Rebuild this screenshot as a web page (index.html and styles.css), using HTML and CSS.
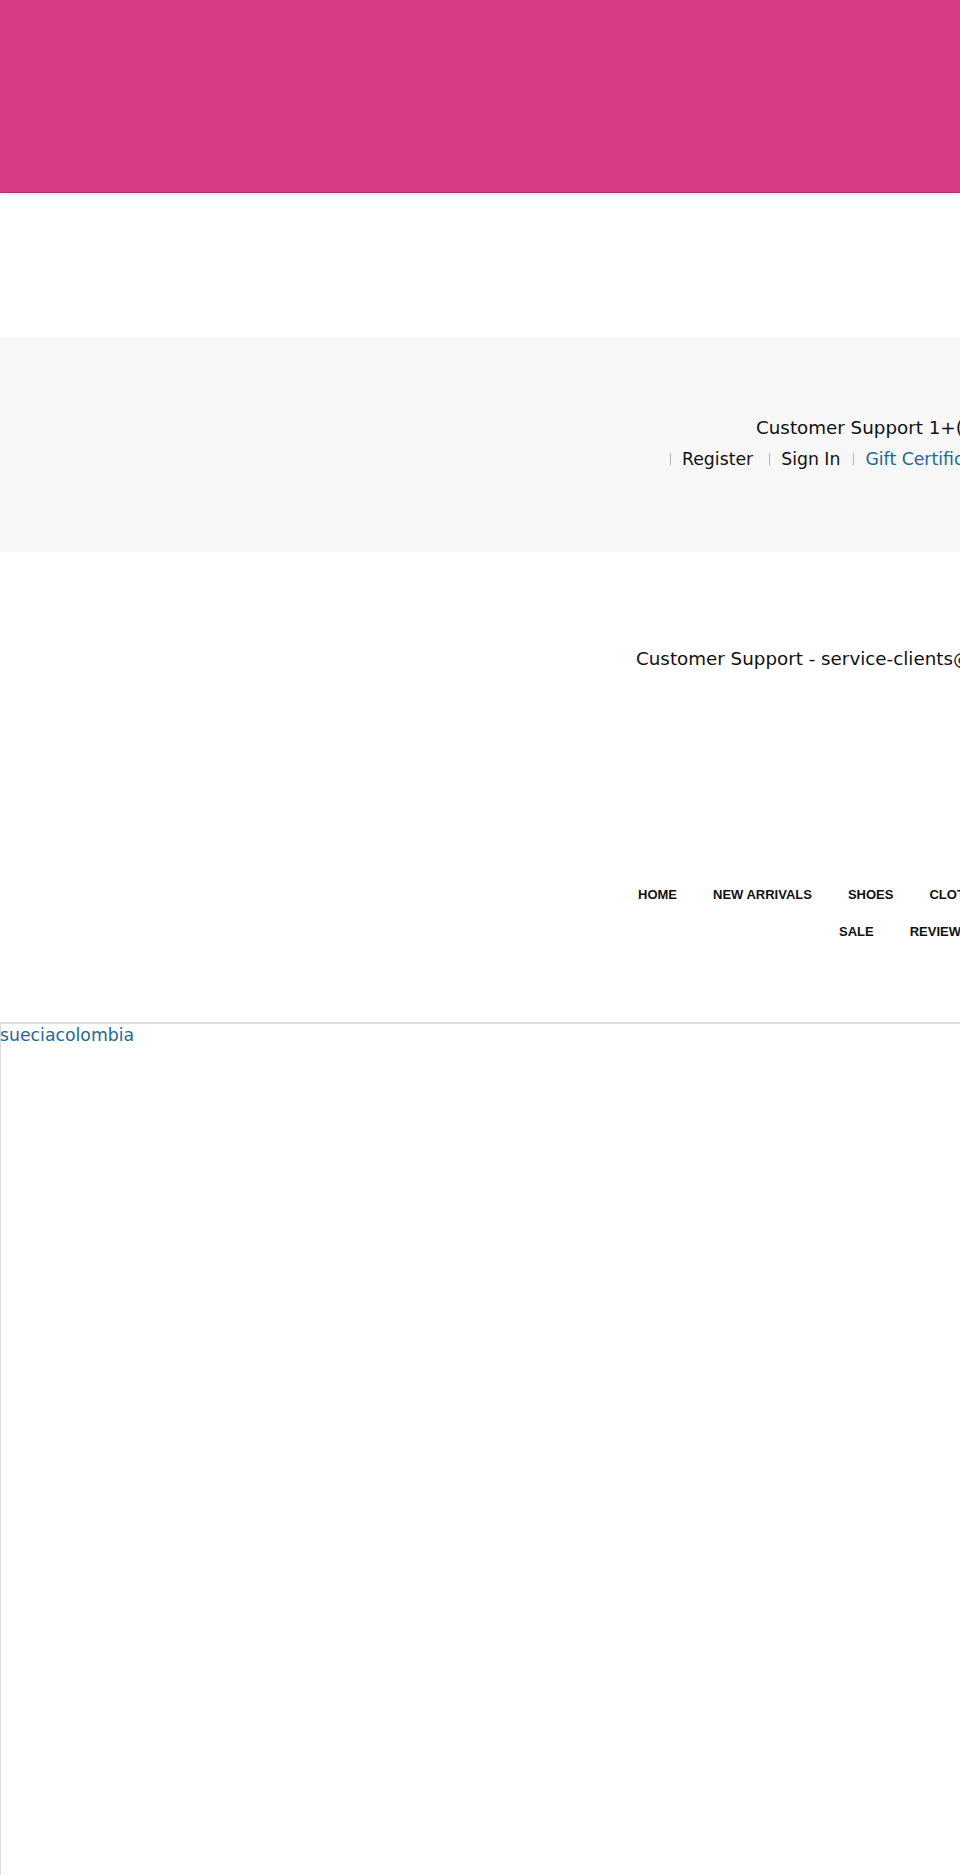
FILE: index.html
```html
<!DOCTYPE html>
<html lang="en">
<head>
<meta charset="utf-8">
<title>sueciacolombia</title>
<link rel="stylesheet" href="styles.css">
</head>
<body>
<div class="promo"></div>
<div class="spacer"></div>
<div class="topbar">
  <div class="support-line">Customer Support 1+(000) 000-0000</div>
  <div class="account-links">
    <span class="sep"></span><a class="link dark" href="#">Register</a>
    <span class="sep sep-wide"></span><a class="link dark" href="#">Sign In</a>
    <span class="sep"></span><a class="link blue" href="#">Gift Certificates</a>
  </div>
</div>
<div class="contact">
  <div class="contact-line">Customer Support - service-clients@sueciacolombia.com</div>
</div>
<nav class="nav">
  <ul class="nav-row row-one">
    <li>HOME</li>
    <li>NEW ARRIVALS</li>
    <li>SHOES</li>
    <li>CLOTHING</li>
    <li>ACCESSORIES</li>
  </ul>
  <ul class="nav-row row-two">
    <li>SALE</li>
    <li>REVIEWS</li>
  </ul>
</nav>
<div class="frame">
  <a class="frame-link" href="#">sueciacolombia</a>
</div>
</body>
</html>
```
FILE: styles.css
```css
html, body {
  margin: 0;
  padding: 0;
}
body {
  width: 960px;
  overflow: hidden;
  font-family: "DejaVu Sans", Verdana, sans-serif;
  color: #111;
  background: #fff;
}
.promo {
  height: 192px;
  background: #d93b85;
  border-bottom: 1px solid #a4356a;
  box-shadow: 0 2px 4px rgba(217, 59, 133, 0.15);
}
.spacer {
  height: 144px;
}
.topbar {
  background: #f7f7f7;
  padding: 77px 0 76px;
  white-space: nowrap;
}
.support-line {
  font-size: 18.3px;
  line-height: 28px;
  padding-left: 756px;
}
.account-links {
  font-size: 17.3px;
  line-height: 34px;
  padding-left: 670px;
  display: flex;
  align-items: center;
}
.sep {
  flex: none;
  display: block;
  width: 1px;
  height: 12px;
  background: #b5b5b5;
  margin-right: 11px;
}
.link {
  text-decoration: none;
}
.link.dark {
  color: #111;
}
.link.dark + .sep {
  margin-left: 13px;
}
.link.dark + .sep-wide {
  margin-left: 16px;
}
.link.blue {
  color: #1d6a98;
}
.contact {
  padding-top: 93px;
  white-space: nowrap;
}
.contact-line {
  font-size: 18.3px;
  line-height: 28px;
  padding-left: 636px;
}
.nav {
  padding-top: 203px;
  padding-bottom: 72px;
}
.nav-row {
  list-style: none;
  margin: 0;
  display: flex;
  white-space: nowrap;
  font-family: "Liberation Sans", Arial, sans-serif;
  font-size: 13px;
  font-weight: bold;
  line-height: 37px;
  color: #111;
}
.nav-row li {
  padding: 0 18px;
}
.row-one {
  padding-left: 620px;
}
.row-two {
  padding-left: 821px;
}
.frame {
  height: 900px;
  border-top: 2px solid #dcdcdc;
  border-left: 1px solid #dcdcdc;
}
.frame-link {
  display: block;
  margin-left: -1px;
  font-size: 17.3px;
  line-height: 22px;
  color: #1d6a98;
  text-decoration: none;
}
```
